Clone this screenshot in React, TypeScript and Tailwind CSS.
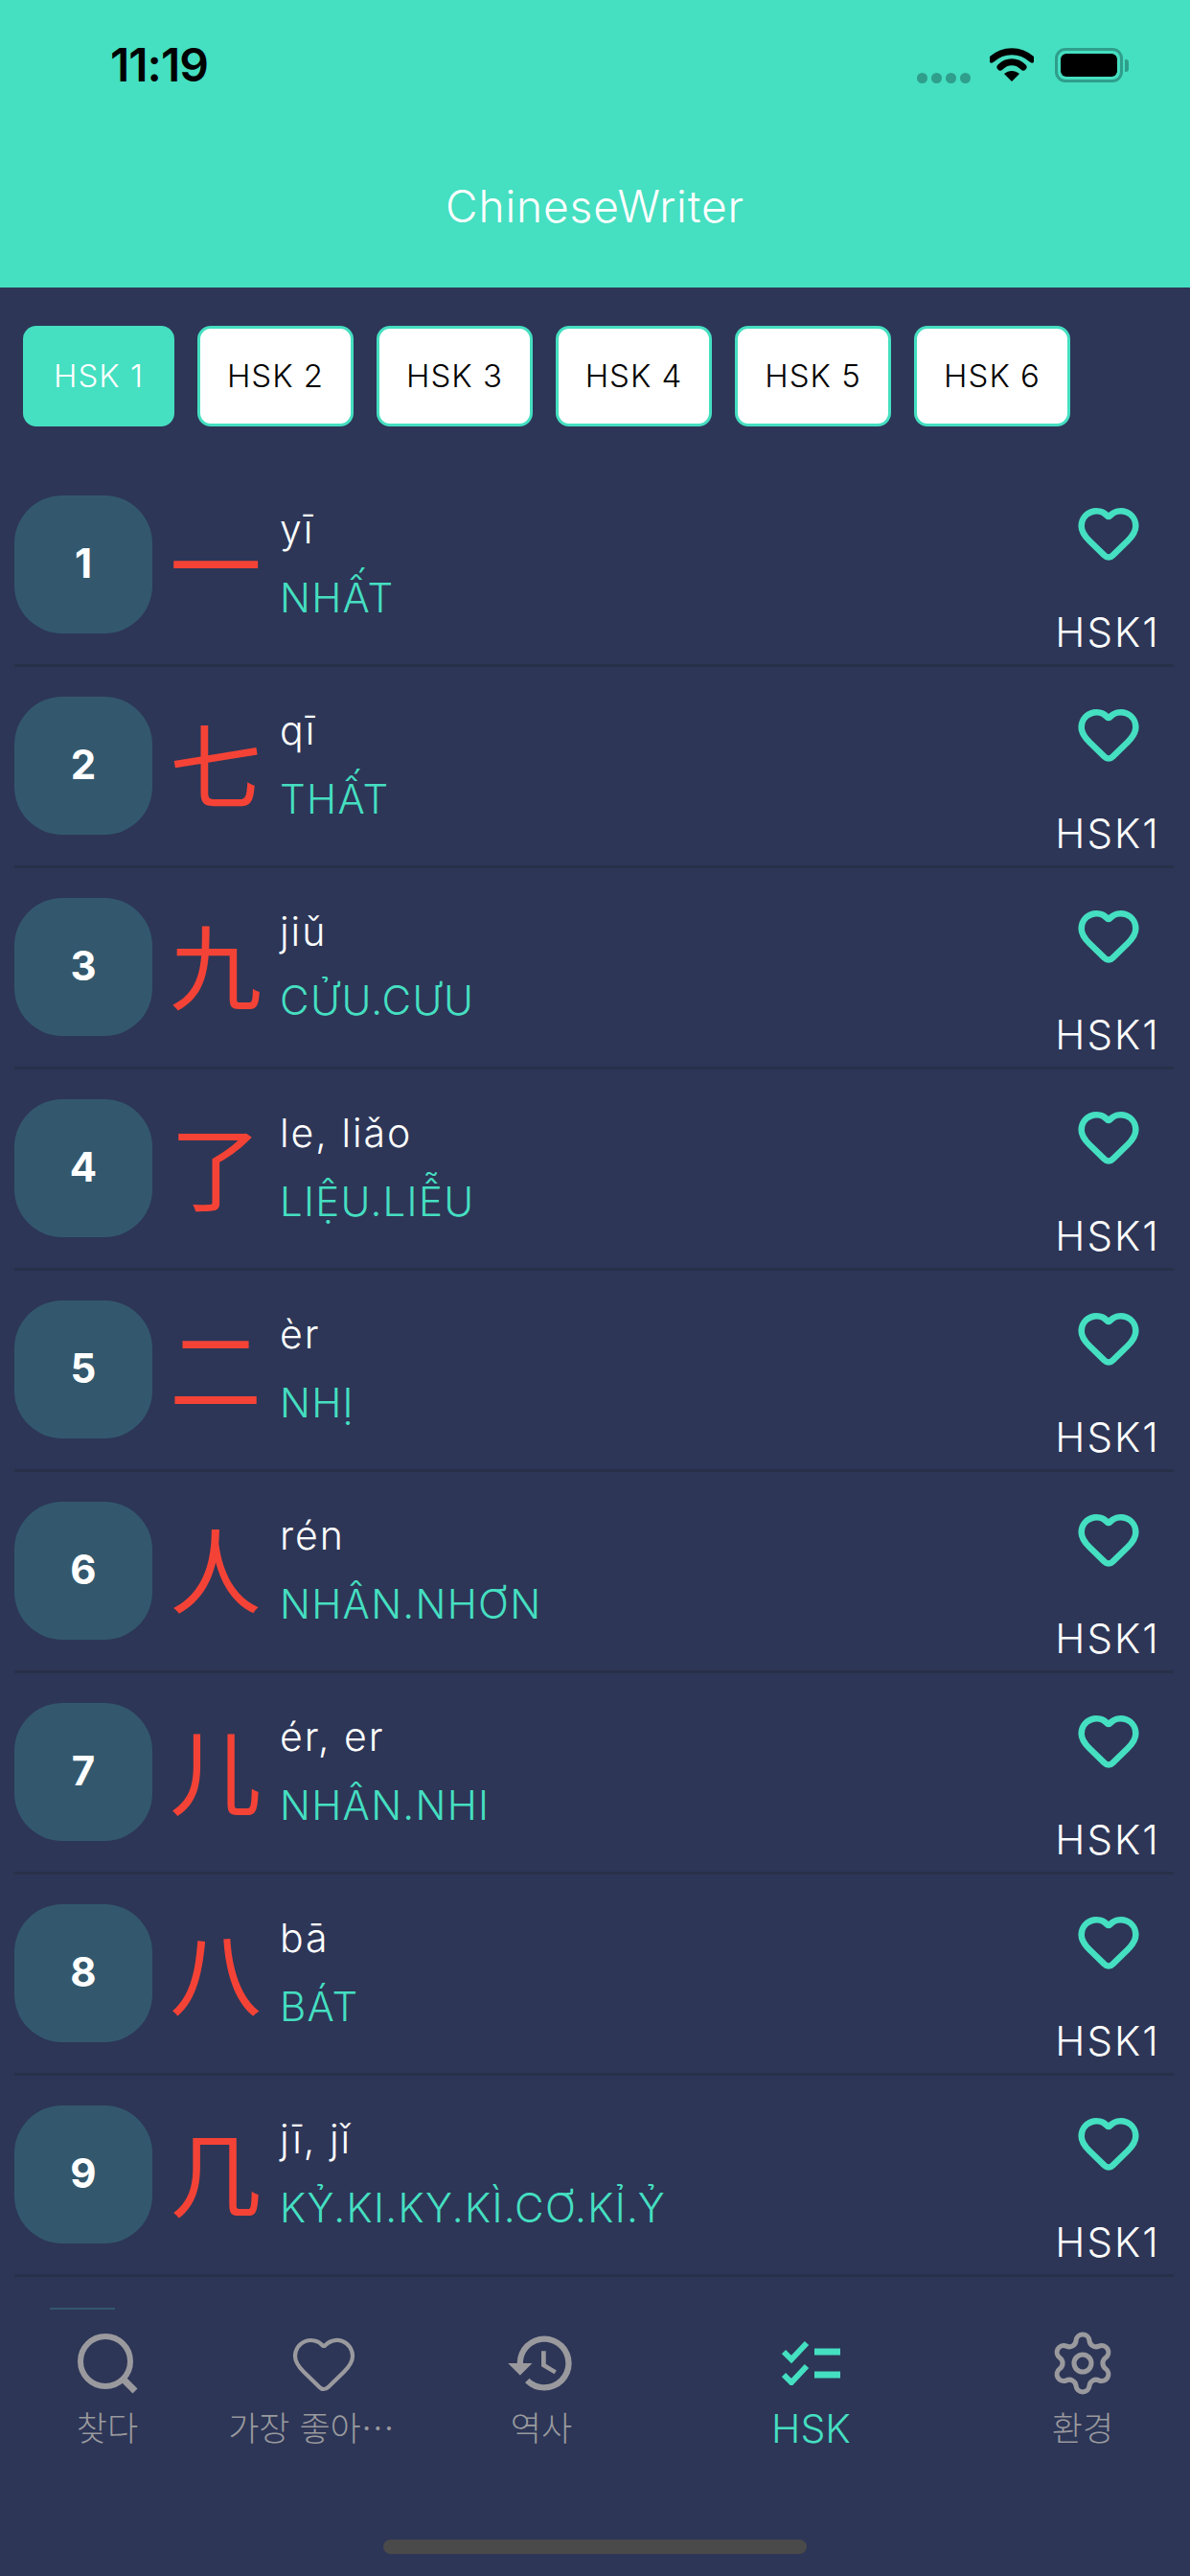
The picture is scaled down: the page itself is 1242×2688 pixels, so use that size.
import React from 'react';
import { Heart, Settings } from 'lucide-react';
import { MdHistory } from 'react-icons/md';

const levels = ['HSK 1', 'HSK 2', 'HSK 3', 'HSK 4', 'HSK 5', 'HSK 6'];

const words = [
  { id: 1, han: '一', pinyin: 'yī', meaning: 'NHẤT' },
  { id: 2, han: '七', pinyin: 'qī', meaning: 'THẤT' },
  { id: 3, han: '九', pinyin: 'jiǔ', meaning: 'CỬU.CƯU' },
  { id: 4, han: '了', pinyin: 'le, liǎo', meaning: 'LIỆU.LIỄU' },
  { id: 5, han: '二', pinyin: 'èr', meaning: 'NHỊ' },
  { id: 6, han: '人', pinyin: 'rén', meaning: 'NHÂN.NHƠN' },
  { id: 7, han: '儿', pinyin: 'ér, er', meaning: 'NHÂN.NHI' },
  { id: 8, han: '八', pinyin: 'bā', meaning: 'BÁT' },
  { id: 9, han: '几', pinyin: 'jī, jǐ', meaning: 'KỶ.KI.KY.KÌ.CƠ.KỈ.Ỷ' },
];

function StatusBar() {
  return (
    <div className="flex items-start h-[130px] pt-[44px] pl-[115px] pr-[64px]">
      <span className="text-[48px] leading-[48px] font-semibold text-black tracking-[-1px]">11:19</span>
      <div className="ml-auto flex items-center h-[48px]">
        <div className="flex gap-[4px] mt-[26px] mr-[20px]">
          {[0, 1, 2, 3].map((i) => (
            <span key={i} className="w-[11px] h-[11px] rounded-full bg-[#2f9e8b]" />
          ))}
        </div>
        <svg width="46" height="36" viewBox="0 0 46 36" className="mr-[22px]">
          <path d="M2 12 C14 1 32 1 44 12" fill="none" stroke="#000" strokeWidth="7" strokeLinecap="round" />
          <path d="M11 20 C18 13 28 13 35 20" fill="none" stroke="#000" strokeWidth="7" strokeLinecap="round" />
          <path d="M23 35 L15 27 C20 23 26 23 31 27 Z" fill="#000" />
        </svg>
        <div className="w-[71px] h-[36px] rounded-[11px] border-[3px] border-[#2f9e8b] p-[3px]">
          <div className="w-full h-full rounded-[6px] bg-black" />
        </div>
        <span className="w-[4px] h-[13px] rounded-r-[3px] bg-[#2f9e8b] ml-[2px]" />
      </div>
    </div>
  );
}

function WordRow({ word }: { word: (typeof words)[number] }) {
  return (
    <div className="flex h-[210px] ml-[15px] mr-[17px] border-b-[3px] border-[#283049]">
      <div className="mt-[31px] w-[144px] h-[144px] rounded-[50px] bg-[#33586d] flex items-center justify-center shrink-0">
        <span className="mt-[-3px] text-[42px] font-bold text-white">{word.id}</span>
      </div>
      <div className="w-[94px] ml-[19px] mt-[27px] h-[144px] flex items-center justify-center shrink-0 text-[96px] leading-none text-[#f44336] [font-family:'Noto_Sans_CJK_SC',sans-serif]">
        {word.han}
      </div>
      <div className="ml-[20px] flex flex-col pt-[40px]">
        <span className="text-[41px] leading-[52px] font-light text-white tracking-[2px]">{word.pinyin}</span>
        <span className="mt-[20px] text-[42px] leading-[52px] font-light text-[#45dfc1] tracking-[1.3px]">{word.meaning}</span>
      </div>
      <div className="ml-auto w-[122px] mr-[8px] flex flex-col items-center">
        <Heart className="mt-[36px] ml-[1px] w-[68px] h-[68px] text-[#45dfc1]" strokeWidth={2.3} />
        <span className="mt-[46px] text-[42px] leading-[48px] font-light text-white tracking-[2px]">HSK1</span>
      </div>
    </div>
  );
}

function TabItem({ width, label, active, children }: { width: string; label: string; active?: boolean; children: React.ReactNode }) {
  return (
    <div className={`${width} flex flex-col items-center shrink-0`}>
      <div className="h-[70px] flex items-center justify-center">{children}</div>
      <span className={active ? 'mt-[8px] text-[41px] leading-[50px] font-light text-[#45dfc1]' : 'mt-[8px] text-[35px] leading-[50px] font-light text-[#9a9a9e] whitespace-nowrap'}>
        {label}
      </span>
    </div>
  );
}

export default function App() {
  return (
    <div className="w-[1242px] h-[2688px] flex flex-col overflow-hidden bg-[#2d3657] [font-family:Inter,'Noto_Sans_CJK_KR',sans-serif]">
      <header className="h-[300px] bg-[#45dfc1] shrink-0">
        <StatusBar />
        <h1 className="mt-[57px] text-center text-[46px] leading-[56px] font-light text-white tracking-[0.9px]">ChineseWriter</h1>
      </header>

      <div className="h-[186px] shrink-0 flex items-start pt-[40px] pl-[24px] gap-[24px]">
        {levels.map((level, i) => (
          <div
            key={level}
            className={
              i === 0
                ? 'w-[158px] h-[105px] rounded-[14px] bg-[#45dfc1] flex items-center justify-center text-[33px] font-light text-white tracking-[1px]'
                : 'w-[163px] h-[105px] rounded-[14px] bg-white border-[3px] border-[#45dfc1] flex items-center justify-center text-[33px] font-light text-black tracking-[1px]'
            }
          >
            {level}
          </div>
        ))}
      </div>

      <div className="h-[1890px] shrink-0">
        {words.map((word) => (
          <WordRow key={word.id} word={word} />
        ))}
      </div>

      <nav className="relative flex-1 flex pt-[55px]">
        <span className="absolute left-[52px] top-[32px] w-[68px] h-[2px] bg-[#33586d]" />
        <TabItem width="w-[224px]" label="찾다">
          <svg width="64" height="64" viewBox="0 0 64 64" fill="none" stroke="#9a9a9e">
            <circle cx="30" cy="30" r="26" strokeWidth="6" />
            <path d="M49 49 L61 61" strokeWidth="7" />
          </svg>
        </TabItem>
        <TabItem width="w-[202px]" label="가장 좋아⋯">
          <Heart className="ml-[26px] w-[72px] h-[72px] text-[#9a9a9e]" strokeWidth={1.4} />
        </TabItem>
        <TabItem width="w-[278px]" label="역사">
          <MdHistory className="w-[76px] h-[76px] text-[#9a9a9e]" />
        </TabItem>
        <TabItem width="w-[285px]" label="HSK" active>
          <svg width="62" height="46" viewBox="0 0 62 46" fill="none" stroke="#45dfc1">
            <path d="M2 11 L10 19 L26 2" strokeWidth="6" />
            <path d="M2 35 L10 43 L26 26" strokeWidth="6" />
            <path d="M34 11 H61" strokeWidth="7" />
            <path d="M34 35 H61" strokeWidth="7" />
          </svg>
        </TabItem>
        <TabItem width="w-[253px] pl-[29px]" label="환경">
          <Settings className="w-[72px] h-[72px] text-[#9a9a9e]" strokeWidth={1.7} />
        </TabItem>
        <span className="absolute left-[400px] top-[274px] w-[442px] h-[15px] rounded-full bg-[#4a4a4a]" />
      </nav>
    </div>
  );
}
